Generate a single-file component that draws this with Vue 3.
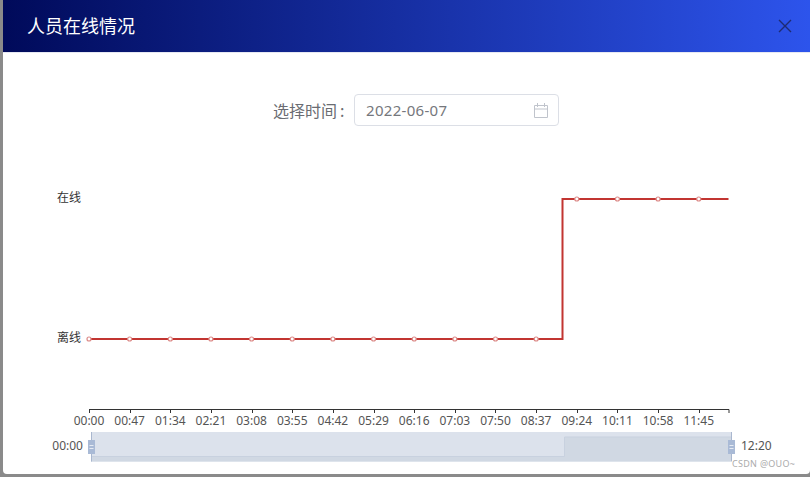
<script setup>
const step = 640 / (740 / 47)
const labels = ['00:00','00:47','01:34','02:21','03:08','03:55','04:42','05:29','06:16','07:03','07:50','08:37','09:24','10:11','10:58','11:45']
const ticks = labels.map((label, i) => ({ label, x: 89 + step * i }))
const markers = ticks.map((t, i) => ({ x: t.x, y: i < 12 ? 339 : 199 }))
</script>

<template>
  <div class="dialog">
    <header class="head">
      <h1 class="title">人员在线情况</h1>
      <svg class="close" width="14" height="14" viewBox="0 0 14 14" aria-label="关闭">
        <path d="M1 1 L13 13 M13 1 L1 13" />
      </svg>
    </header>
    <div class="filter">
      <span class="filter-label">选择时间<span class="colon">:</span></span>
      <div class="date-input">
        <span class="date-value">2022-06-07</span>
        <svg class="cal" width="16" height="16" viewBox="0 0 16 16">
          <path d="M1.5 3.5 H14.5 V15.5 H1.5 Z M1.5 7 H14.5 M4.5 1 V5 M11.5 1 V5" />
        </svg>
      </div>
    </div>
    <svg class="chart" width="807" height="348" viewBox="3 126 807 348">
      <g class="ylabels">
        <text x="81" y="201.5" text-anchor="end">在线</text>
        <text x="81" y="341.5" text-anchor="end">离线</text>
      </g>

      <polyline class="line" points="89,339 562.5,339 562.5,199 728.5,199" />
      <circle v-for="m in markers" :key="m.x" class="marker" :cx="m.x" :cy="m.y" r="2" />

      <path class="axis" d="M89 409.5 H729 M729 409.5 V413" />
      <g v-for="t in ticks" :key="t.label">
        <line class="axis" :x1="Math.round(t.x) + 0.5" :x2="Math.round(t.x) + 0.5" y1="409" y2="413" />
        <text class="xlabel" :x="t.x" y="425" text-anchor="middle">{{ t.label }}</text>
      </g>

      <rect class="zoom-bg" x="91" y="432" width="640" height="29.5" />
      <path class="shadow" d="M91 456.5 H564.5 V437 H731 V461.5 H91 Z" />
      <path class="shadow-line" d="M91 456.5 H564.5 V437 H731" />
      <line class="zoom-edge" x1="91.5" x2="91.5" y1="432" y2="461.5" />
      <line class="zoom-edge" x1="731.5" x2="731.5" y1="432" y2="461.5" />
      <g v-for="hx in [88, 728]" :key="hx">
        <rect class="handle" :x="hx" y="440" width="7" height="14" />
        <path class="grip" :d="`M${hx + 1.5} 445.5 h4 M${hx + 1.5} 448.5 h4`" />
      </g>
      <text class="xlabel" x="83" y="450" text-anchor="end">00:00</text>
      <text class="xlabel" x="741" y="450">12:20</text>
      <text class="mark" x="732" y="466.5">CSDN @OUO~</text>
    </svg>
  </div>
</template>

<style scoped>
.dialog {
  margin-left: 3px;
  height: 474px;
  background: #fff;
  border-radius: 0 0 4px 4px;
  overflow: hidden;
  display: flex;
  flex-direction: column;
  font-family: "Noto Sans", "Noto Sans CJK SC", sans-serif;
}
.head {
  height: 53px;
  flex: none;
  box-sizing: border-box;
  display: flex;
  align-items: center;
  justify-content: space-between;
  padding: 0 18px 0 24px;
  background: linear-gradient(90deg, #000a5a 0%, #2d54ec 100%);
  border-bottom: 1px solid #e6e8f2;
}
.title {
  margin: 0 0 2px;
  font-size: 18px;
  font-weight: 400;
  color: #fff;
  font-family: "Noto Sans CJK SC", sans-serif;
}
.close path {
  fill: none;
  stroke: #1e2b72;
  stroke-width: 1.4;
}
.filter {
  flex: none;
  display: flex;
  align-items: center;
  margin-top: 41px;
  height: 32px;
  padding-left: 270px;
}
.filter-label {
  width: 81px;
  flex: none;
  font-size: 16px;
  color: #6a6c72;
  font-family: "Noto Sans CJK SC", sans-serif;
}
.colon {
  margin-left: 3px;
}
.date-input {
  width: 205px;
  height: 32px;
  box-sizing: border-box;
  border: 1px solid #dcdfe6;
  border-radius: 4px;
  display: flex;
  align-items: center;
  justify-content: space-between;
  padding: 0 9px 0 11px;
}
.date-value {
  font-size: 15px;
  letter-spacing: 0.3px;
  color: #75777c;
}
.cal path {
  fill: none;
  stroke: #c0c4cc;
  stroke-width: 1;
}
.chart {
  display: block;
  flex: none;
}
.ylabels text {
  font-size: 12px;
  fill: #333;
  font-family: "Noto Sans CJK SC", sans-serif;
}
.line {
  fill: none;
  stroke: #c23531;
  stroke-width: 2;
}
.marker {
  fill: #fff;
  stroke: #dc8a88;
  stroke-width: 1.2;
}
.axis {
  fill: none;
  stroke: #333;
  stroke-width: 1;
}
.xlabel {
  font-size: 12px;
  fill: #555;
}
.zoom-bg {
  fill: #dce2ec;
}
.shadow {
  fill: #d0d8e3;
}
.shadow-line {
  fill: none;
  stroke: #c8d1df;
  stroke-width: 1;
}
.zoom-edge {
  stroke: #a9b7cf;
  stroke-width: 1;
}
.handle {
  fill: #a9bad6;
}
.grip {
  fill: none;
  stroke: #e6ebf3;
  stroke-width: 1;
}
.mark {
  font-size: 9px;
  letter-spacing: 0.3px;
  fill: #ababab;
}
</style>

<style>
body {
  background: #8a8a8a;
}
</style>
